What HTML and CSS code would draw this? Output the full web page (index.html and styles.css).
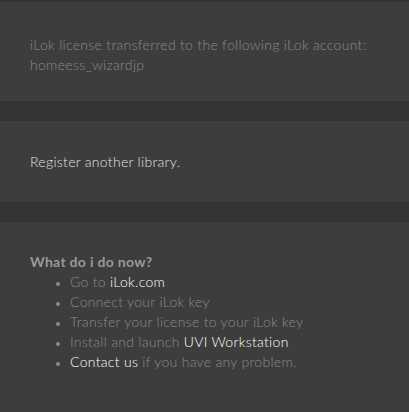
FILE: index.html
```html
<!DOCTYPE html>
<html lang="en">
<head>
    <meta charset="UTF-8">
    <meta name="viewport" content="width=device-width, initial-scale=1.0">
    <title>iLok Transfer</title>
    <link rel="stylesheet" href="styles.css">
</head>
<body>

    <div class="panel panel-first">
        <p class="info">iLok license transferred to the following iLok account:<br>homeess_wizardjp</p>
    </div>

    <div class="panel panel-short">
        <a href="#" class="register">Register another library.</a>
    </div>

    <div class="panel panel-last">
        <h4>What do i do now?</h4>
        <ul class="steps">
            <li>Go to <a href="#">iLok.com</a></li>
            <li>Connect your iLok key</li>
            <li>Transfer your license to your iLok key</li>
            <li>Install and launch <a href="#">UVI Workstation</a></li>
            <li><a href="#">Contact us</a> if you have any problem.</li>
        </ul>
    </div>

</body>
</html>
```

FILE: styles.css
```css
/* General Styling */
body {
    font-family: 'Lato', 'Open Sans', sans-serif;
    font-weight: 300;
    font-size: 14px;
    line-height: 20px;
    letter-spacing: 0.3px;
    background: #333333;
    margin: 0;
    padding-top: 2px;
    color: #8a8a8a;
}

.panel {
    background: #3d3d3d;
    padding: 0 30px;
    margin-bottom: 20px;
}

.panel-first {
    height: 99px;
    padding-top: 33px;
    box-sizing: border-box;
}

.panel-short {
    height: 81px;
    padding-top: 31px;
    box-sizing: border-box;
}

.panel-last {
    height: 190px;
    padding-top: 30px;
    box-sizing: border-box;
    margin-bottom: 0;
}

.info {
    margin: 0;
}

a {
    color: #ffffff;
    text-decoration: none;
}

.register {
    color: #e2e2e2;
}

h4 {
    margin: 0;
    font-size: 14px;
    font-weight: 700;
    color: #999999;
}

.steps {
    margin: 0;
    padding-left: 40px;
}

.steps li::marker {
    font-size: 11px;
}
```
